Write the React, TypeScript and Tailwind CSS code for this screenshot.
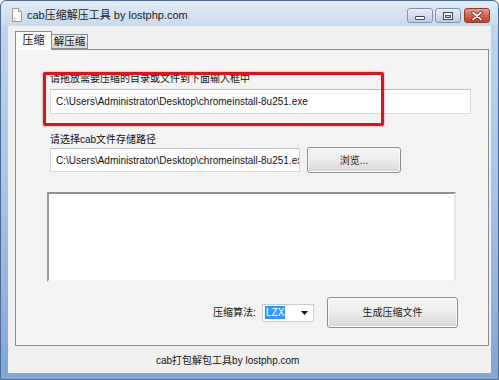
import React from "react";

const FONT = "font-['Liberation_Sans','Noto_Sans_CJK_SC',sans-serif]";

function PageIcon() {
  return (
    <svg width="10" height="14" viewBox="0 0 10 14">
      <path d="M0.5 0.5 H6.5 L9.5 3.5 V13.5 H0.5 Z" fill="#fdfdf6" stroke="#9a9a9a" />
      <path d="M6.5 0.5 V3.5 H9.5" fill="#e8e8e0" stroke="#9a9a9a" />
      <rect x="1.5" y="9" width="3" height="4" fill="#efe7b0" />
    </svg>
  );
}

function CtrlBtn({ kind }: { kind: "min" | "max" | "close" }) {
  const close = kind === "close";
  return (
    <div
      className={
        "w-[26px] h-[15px] rounded-[3px] border flex items-center justify-center " +
        (close
          ? "border-[#8a3b30] bg-gradient-to-b from-[#e9a08f] via-[#d4624c] to-[#c0442f]"
          : "border-[#7d93b2] bg-gradient-to-b from-[#e8eef7] via-[#d3dfee] to-[#bccde3]")
      }
    >
      {kind === "min" && (
        <div className="w-[10px] h-[4px] mt-[5px] bg-white border border-[#3b4a60] rounded-[1px]" />
      )}
      {kind === "max" && (
        <div className="w-[10px] h-[8px] border border-[#3b4a60] bg-white flex items-center justify-center">
          <div className="w-[6px] h-[3px] mt-[1px] bg-[#c9d6e6] border border-[#3b4a60]" />
        </div>
      )}
      {close && (
        <svg width="12" height="10" viewBox="0 0 12 10">
          <path d="M2 1.5 L10 8.5 M10 1.5 L2 8.5" stroke="#5a1e16" strokeWidth="3.2" strokeLinecap="round" />
          <path d="M2 1.5 L10 8.5 M10 1.5 L2 8.5" stroke="#ffffff" strokeWidth="1.8" strokeLinecap="round" />
        </svg>
      )}
    </div>
  );
}

function WinButton({ label, className }: { label: string; className: string }) {
  return (
    <div
      className={
        "rounded-[3px] border border-[#8e8f8f] bg-gradient-to-b from-[#f6f6f6] via-[#ebebeb] to-[#d8d8d8] flex items-center justify-center text-[10px] text-[#1b1b1b] shadow-[inset_0_0_0_1px_#fbfbfb] " +
        className
      }
    >
      {label}
    </div>
  );
}

export default function App() {
  return (
    <div className={"relative w-[499px] h-[380px] overflow-hidden " + FONT}>
      <div className="w-[499px] h-[380px] flex flex-col border border-[#4d6b93] rounded-t-[6px] bg-gradient-to-b from-[#c4d6ec] via-[#a9c3e2] to-[#7fa6d6]">
        {/* Title bar */}
        <div className="h-[25px] flex items-start rounded-t-[6px] bg-gradient-to-b from-[#e1ebf6] to-[#c9daee]">
          <div className="ml-[11px] mt-[7px]">
            <PageIcon />
          </div>
          <div className="ml-[5px] mt-[7px] text-[11px] leading-[14px] text-[#1a1a1a]">
            cab压缩解压工具 by lostphp.com
          </div>
          <div className="flex-1" />
          <div className="mt-[7px] mr-[8px] flex gap-[2px]">
            <CtrlBtn kind="min" />
            <CtrlBtn kind="max" />
            <div className="ml-[1px]">
              <CtrlBtn kind="close" />
            </div>
          </div>
        </div>

        {/* Client area */}
        <div className="ml-[7px] mr-[7px] h-[347px] bg-[#f0f0f0] border-x border-[#e9eff7] flex flex-col">
          {/* Tabs */}
          <div className="mt-[5px] ml-[6px] h-[18px] flex items-end">
            <div className="relative z-10 w-[37px] h-[19px] -mb-px bg-white border border-b-0 border-[#898c95] flex items-center justify-center text-[11px] text-[#111] pb-[1px]">
              压缩
            </div>
            <div className="w-[36px] h-[15px] border border-l-0 border-[#898c95] bg-gradient-to-b from-[#f2f2f2] to-[#d9d9d9] flex items-center justify-center text-[10.5px] text-[#111]">
              解压缩
            </div>
          </div>
          {/* Panel */}
          <div className="ml-[6px] mr-[1px] h-[297px] border border-[#898c95] bg-[#f3f3f3] flex flex-col pl-[34px] text-[10px] text-[#111]">
            <div className="mt-[22px] h-[13px] leading-[13px]">请拖放需要压缩的目录或文件到下面输入框中</div>
            <div className="mt-[4px] w-[421px] h-[25px] bg-white border border-[#d5d9de] border-t-[#b9bdc3] flex items-center pl-[5px] text-[10px] text-[#111]">
              C:\Users\Administrator\Desktop\chromeinstall-8u251.exe
            </div>
            <div className="mt-[19px] h-[13px] leading-[13px]">请选择cab文件存储路径</div>
            <div className="mt-[1px] h-[26px] flex items-center">
              <div className="w-[250px] h-[24px] bg-white border border-[#d5d9de] border-t-[#b9bdc3] flex items-center pl-[5px] overflow-hidden whitespace-nowrap">
                C:\Users\Administrator\Desktop\chromeinstall-8u251.exe
              </div>
              <WinButton label="浏览..." className="ml-[7px] w-[94px] h-[26px]" />
            </div>
            <div className="mt-[19px] -ml-[3px] w-[409px] h-[90px] bg-white border-2 border-t-[#8f8f8f] border-l-[#9c9c9c] border-b-[#f4f4f4] border-r-[#e6e6e6]" />
            <div className="mt-[15px] h-[31px] flex items-center">
              <div className="ml-[163px] w-[49px] whitespace-nowrap">压缩算法:</div>
              <div className="w-[52px] h-[18px] bg-white border border-[#c5cdd8] flex items-center pl-[2px]">
                <span className="bg-[#3399ff] text-white px-[1px] leading-[13px] h-[13px]">LZX</span>
                <div className="flex-1" />
                <svg width="7" height="4" viewBox="0 0 7 4" className="mr-[5px]">
                  <path d="M0 0 H7 L3.5 4 Z" fill="#111" />
                </svg>
              </div>
              <WinButton label="生成压缩文件" className="ml-[13px] w-[131px] h-[31px]" />
            </div>
          </div>
          {/* Status */}
          <div className="mt-[8px] pl-[147px] h-[13px] leading-[13px] text-[10px] text-[#111]">
            cab打包解包工具by lostphp.com
          </div>
        </div>
      </div>

      {/* Red highlight rectangle */}
      <div className="absolute left-[43px] top-[72px] w-[341px] h-[54px] border-[3px] border-[#d3171d] rounded-[2px] shadow-[0_0_2px_rgba(160,0,0,0.6)]" />
    </div>
  );
}
